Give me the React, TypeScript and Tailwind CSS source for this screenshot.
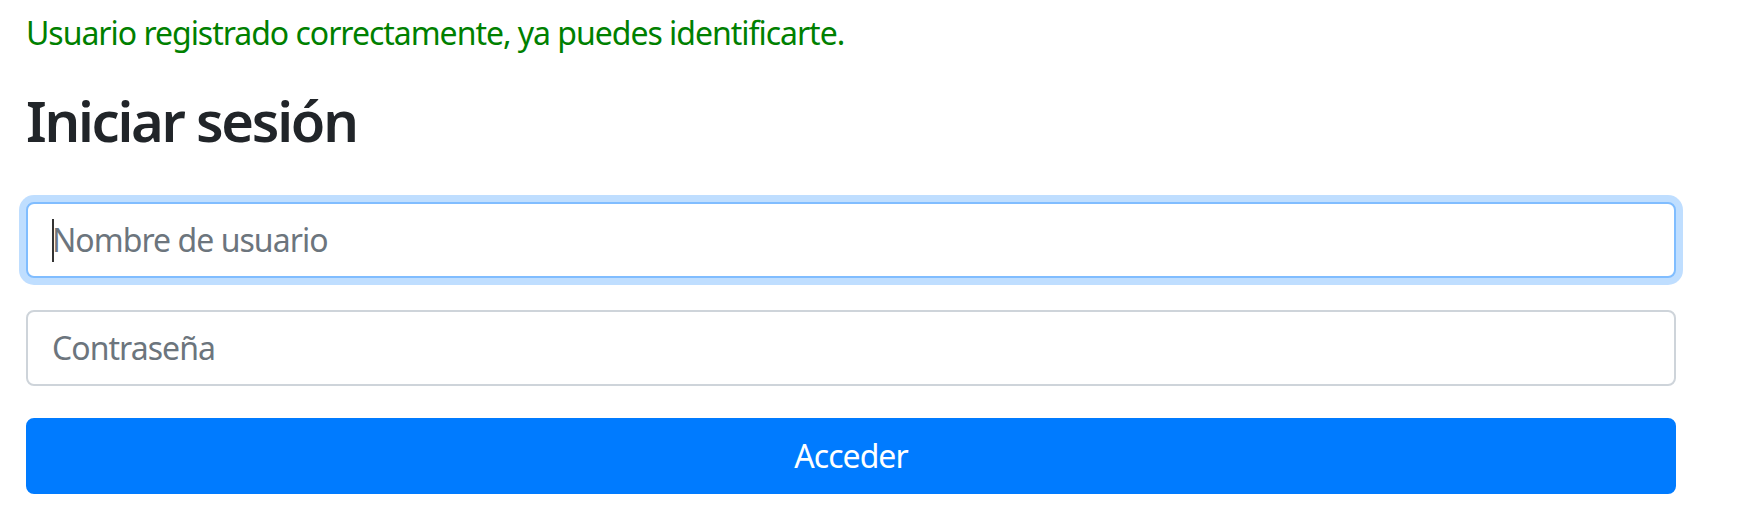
import React from 'react';

const font = { fontFamily: '"Noto Sans", "Open Sans", sans-serif' };

export default function App() {
  return (
    <div className="min-h-[508px] bg-white pl-[26px] pt-[9px]" style={font}>
      <div className="w-[1650px]">
        <p className="mb-[30px] text-[32px] leading-[48px] tracking-[-0.032em] text-[#008000]">
          Usuario registrado correctamente, ya puedes identificarte.
        </p>
        <h3 className="mb-[48px] text-[56px] font-semibold leading-[67px] tracking-[-0.04em] text-[#212529]">
          Iniciar sesión
        </h3>
        <form className="flex flex-col gap-8" onSubmit={(e) => e.preventDefault()}>
          <div className="relative">
            <input
              type="text"
              placeholder="Nombre de usuario"
              className="block w-full rounded-lg border-2 border-[#80bdff] bg-white px-6 py-3 text-[32px] leading-[48px] tracking-[-0.03em] text-[#495057] caret-transparent shadow-[0_0_0_7px_rgba(0,123,255,0.25)] outline-none placeholder:text-[#6c757d]"
            />
            <span className="absolute left-[26px] top-[17px] h-[43px] w-[2px] bg-[#333]" />
          </div>
          <input
            type="password"
            placeholder="Contraseña"
            className="block w-full rounded-lg border-2 border-[#ced4da] bg-white px-6 py-3 text-[32px] leading-[48px] tracking-[-0.03em] text-[#495057] outline-none placeholder:text-[#6c757d]"
          />
          <button
            type="submit"
            className="block w-full rounded-lg border-2 border-[#007bff] bg-[#007bff] px-6 py-3 text-[32px] leading-[48px] tracking-[-0.03em] text-white"
          >
            Acceder
          </button>
        </form>
      </div>
    </div>
  );
}
